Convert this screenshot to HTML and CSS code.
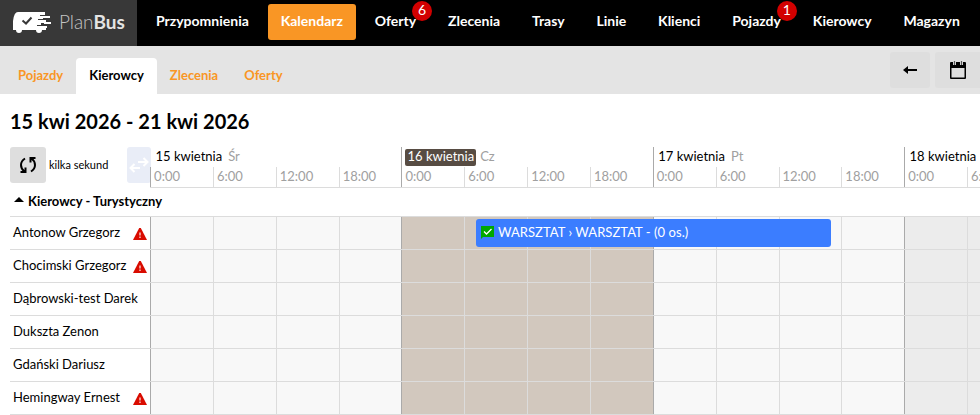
FILE: index.html
```html
<!DOCTYPE html>
<html lang="pl">
<head>
<meta charset="utf-8">
<title>PlanBus</title>
<link rel="stylesheet" href="styles.css">
</head>
<body>
<header class="topbar">
  <a class="logo">
    <svg width="38" height="22" viewBox="0 0 38 22"><path fill="#fff" d="M5 1H32V4H27V5H37V7H30V8H25V9H33V11H38V13H31V12H28V14H24V15H34V17H33V19H29A3 3 0 0 1 23 19H9A3 3 0 0 1 3 19H0V10Q1 1 5 1Z"/><path d="M9.5 9.5L13 12.5L18.5 6.5" fill="none" stroke="#383838" stroke-width="2"/></svg>
    <span class="wordmark">Plan<b>Bus</b></span>
  </a>
  <nav class="menu">
    <a>Przypomnienia</a><a class="active">Kalendarz</a><a>Oferty<i class="badge">6</i></a><a>Zlecenia</a><a>Trasy</a><a>Linie</a><a>Klienci</a><a>Pojazdy<i class="badge">1</i></a><a>Kierowcy</a><a>Magazyn</a>
  </nav>
</header>
<div class="subbar">
  <nav class="tabs"><a>Pojazdy</a><a class="current">Kierowcy</a><a>Zlecenia</a><a>Oferty</a></nav>
  <div class="tools">
    <button><svg width="14" height="8" viewBox="0 0 14 8"><path d="M0 4L5 0V3H14V5H5V8Z"/></svg></button>
    <button class="wide"><svg width="18" height="20" viewBox="0 0 18 20"><path fill-rule="evenodd" d="M2 2H16Q17 2 17 3V18Q17 19 16 19H2Q1 19 1 18V3Q1 2 2 2ZM2.5 8V17.5H15.5V8Z"/><path d="M5.5 0V5M12.5 0V5" stroke="#dedede" stroke-width="3"/><path d="M5.5 1V5M12.5 1V5" stroke="#555" stroke-width="1.2"/></svg></button>
  </div>
</div>
<main>
  <h1>15 kwi 2026 - 21 kwi 2026</h1>
  <div class="scale">
    <div class="controls">
      <button class="refresh"><svg width="18" height="18" viewBox="0 0 18 18" fill="none" stroke="#000" stroke-width="2"><path d="M6 2.5Q2 5 2 9Q2 13 5.5 15.5M1.5 16H6.5V11.5"/><path d="M12 15.5Q16 13 16 9Q16 5 12.5 2.5M16.5 2H11.5V6.5"/></svg></button>
      <span class="ago">kilka sekund</span>
      <button class="swap"><svg width="20" height="16" viewBox="0 0 20 16" fill="none" stroke="#fff" stroke-width="2"><path d="M9 5H18.5M14.5 1L18.5 5L14.5 9M11 11H1.5M5.5 7L1.5 11L5.5 15"/></svg></button>
    </div>
    <div class="days">
      <div class="day first"><p><span>15 kwietnia</span><em>Śr</em></p><div class="hours"><span>0:00</span><span>6:00</span><span>12:00</span><span>18:00</span></div></div>
      <div class="day today"><p><span>16 kwietnia</span><em>Cz</em></p><div class="hours"><span>0:00</span><span>6:00</span><span>12:00</span><span>18:00</span></div></div>
      <div class="day"><p><span>17 kwietnia</span><em>Pt</em></p><div class="hours"><span>0:00</span><span>6:00</span><span>12:00</span><span>18:00</span></div></div>
      <div class="day"><p><span>18 kwietnia</span></p><div class="hours"><span>0:00</span><span>6:00</span></div></div>
    </div>
  </div>
  <div class="group"><svg width="10" height="5" viewBox="0 0 10 5"><path d="M0 5L5 0L10 5Z"/></svg>Kierowcy - Turystyczny</div>
  <div class="rows" id="rows">
    <div class="event"><svg width="13" height="13" viewBox="0 0 13 13"><path fill="#00a800" d="M0 0H13V11H2L0 13Z"/><path d="M3 5.5L5.5 8L10.5 3" fill="none" stroke="#fff" stroke-width="1.3"/></svg>WARSZTAT › WARSZTAT - (0 os.)</div>
  </div>
</main>
<script src="app.js"></script>
</body>
</html>
```
FILE: styles.css
```css
* { box-sizing: border-box; }
html, body { overflow: hidden; }
body { margin: 0; height: 415px; background: #fff; color: #000; font: 13px/16px Lato, sans-serif; }
main { overflow: hidden; }
button { border: 0; padding: 0; display: flex; align-items: center; justify-content: center; background: #dedede; border-radius: 3px; }
.topbar { display: flex; height: 46px; background: #000; }
.logo { flex: none; width: 137px; display: flex; align-items: center; padding: 0 0 2px 13px; gap: 8px; background: #383838; }
.wordmark { color: #c4c4c4; font-size: 19px; font-weight: 300; line-height: 22px; letter-spacing: -.05px; }
.wordmark b { color: #e4e4e4; font-weight: 700; }
.menu { display: flex; gap: 5.87px; padding: 4px 0 0 6px; }
.menu a { position: relative; flex: none; height: 36px; padding: 0 13px; color: #fff; font-size: 14px; font-weight: 700; line-height: 34px; border-radius: 3px; }
.menu .active { background: #f99625; }
.badge { position: absolute; top: -3px; right: -3px; width: 20px; height: 20px; border-radius: 50%; background: #d20000; font: 14px/18px Lato, sans-serif; text-align: center; }
.subbar { display: flex; justify-content: space-between; height: 48px; background: #e4e4e4; }
.tabs { display: flex; padding: 12px 0 0 5px; }
.tabs a { padding: 0 13px; color: #f99625; font-weight: 700; line-height: 35px; border-radius: 4px 4px 0 0; }
.tabs .current { background: #fff; color: #000; }
.tools { display: flex; gap: 5px; padding-top: 6px; }
.tools button { width: 40px; height: 36px; }
.tools .wide { width: 45px; border-radius: 3px 0 0 3px; }
h1 { margin: 0; padding: 14px 0 0 10px; height: 53px; font-size: 20px; line-height: 26px; }
.scale { display: flex; margin-left: 10px; height: 41px; }
.controls { flex: none; width: 140.12px; display: flex; align-items: flex-start; }
.refresh { width: 36px; height: 36px; }
.ago { flex: 1; padding-left: 3px; font-size: 11px; line-height: 36px; }
.swap { width: 24px; height: 36px; margin-right: -1px; background: #e9edf7; }
.days { flex: none; width: 1005.45px; display: grid; grid-template-columns: repeat(4, 1fr); border-bottom: 1px solid #dcdcdc; }
.day { border-left: 1px solid #aaa; }
.day p { margin: 0; height: 20px; padding: 2px 0 0 3.4px; display: flex; gap: 4px; line-height: 15px; }
.day p span { padding: 0 2px 0 1px; height: 17px; }
.day em { font-style: normal; color: #a0a0a0; }
.today p { padding-left: 3px; }
.today p span { background: #574c43; color: #fff; border-radius: 2px; padding: 0 2px; }
.first { border-color: transparent; }
.hours { display: grid; grid-template-columns: repeat(4, 1fr); margin-left: -1px; height: 20px; color: #a0a0a0; }
.hours span { padding: 1px 0 0 3px; border-left: 1px solid #dcdcdc; }
.hours span:first-child { border-color: #aaa; }
.group { display: flex; align-items: center; height: 29px; margin-left: 10px; padding: 0 0 2px 4px; gap: 4px; font-weight: 700; border-bottom: 1px solid #dcdcdc; }
.group svg { margin-bottom: 4px; }
.rows { position: relative; margin-left: 10px; }
.row { display: flex; height: 33px; border-bottom: 1px solid #dcdcdc; }
.name { flex: none; width: 140.12px; display: flex; justify-content: space-between; padding: 0 3px; line-height: 31px; white-space: nowrap; }
.name svg { margin-top: 11px; }
.cells { flex: none; width: 1005.45px; display: grid; grid-template-columns: repeat(16, 1fr); }
.cells i { border-left: 1px solid #dcdcdc; background: #f8f8f8; }
.cells i:nth-child(4n+1) { border-color: #aaa; }
.cells .now { background: #d2c8be; }
.cells .weekend { background: #ececec; }
.event { position: absolute; z-index: 1; left: 466px; top: 2px; width: 355px; height: 28px; display: flex; align-items: center; gap: 4px; padding: 0 0 2px 5px; border-radius: 3px; background: #3b7dff; color: #fff; letter-spacing: .05px; }
```
FILE: app.js
```js
const drivers = [
  ["Antonow Grzegorz", true], ["Chocimski Grzegorz", true], ["Dąbrowski-test Darek", false],
  ["Dukszta Zenon", false], ["Gdański Dariusz", false], ["Hemingway Ernest", true]
];
const warning = '<svg width="14" height="12" viewBox="0 0 14 12"><path fill="#d90b00" d="M6.2 0H7.8L14 12H0Z"/><path d="M7 4.5V7.5M7 8.5V10" stroke="#f6b8b4" stroke-width="1.6"/></svg>';
const dayClass = ["", "now", "", "weekend"];
const rows = document.getElementById("rows");
for (const [name, alert] of drivers) {
  const cells = Array.from({ length: 16 }, (_, i) => `<i class="${dayClass[Math.floor(i / 4)]}"></i>`).join("");
  rows.insertAdjacentHTML("beforeend", `<div class="row"><div class="name">${name}${alert ? warning : ""}</div><div class="cells">${cells}</div></div>`);
}
```
